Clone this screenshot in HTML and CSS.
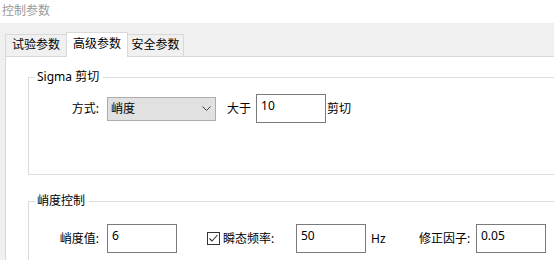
FILE: index.html
```html
<!DOCTYPE html>
<html>
<head>
<meta charset="utf-8">
<link rel="stylesheet" href="styles.css">
</head>
<body>
<div class="title">控制参数</div>
<div class="window">
  <div class="tabs">
    <div class="tab first">试验参数</div>
    <div class="tab active">高级参数</div>
    <div class="tab last">安全参数</div>
  </div>
  <div class="panel">
    <fieldset class="group g1">
      <legend>Sigma 剪切</legend>
      <div class="row">
        <span class="lbl">方式:</span>
        <div class="combo"><span>峭度</span><svg class="chev" width="9" height="5" viewBox="0 0 9 5"><polyline points="0.5,0.5 4.5,4.5 8.5,0.5" fill="none" stroke="#444" stroke-width="1"/></svg></div>
        <span class="gt">大于</span>
        <div class="box">10</div>
        <span class="cut">剪切</span>
      </div>
    </fieldset>
    <fieldset class="group g2">
      <legend>峭度控制</legend>
      <div class="row">
        <span class="lbl">峭度值:</span>
        <div class="box">6</div>
        <span class="chk"><svg width="11" height="11" viewBox="0 0 11 11"><polyline points="1.5,5.5 4,8 9.5,2" fill="none" stroke="#333" stroke-width="1.1"/></svg></span>
        <span class="freq">瞬态频率:</span>
        <div class="box">50</div>
        <span class="hz">Hz</span>
        <span class="corr">修正因子:</span>
        <div class="box">0.05</div>
      </div>
    </fieldset>
  </div>
</div>
</body>
</html>
```

FILE: styles.css
```css
html, body {
  margin: 0;
  width: 554px;
  height: 260px;
  overflow: hidden;
}
body {
  font: 12px/16px "Noto Sans", "Noto Sans CJK SC", sans-serif;
  color: #000;
  background: #f0f0f0;
}
.title {
  height: 23px;
  background: #fff;
  color: #9a9a9a;
  padding-left: 2px;
  line-height: 22px;
}
.window {
  padding: 9px 0 0 5px;
}
.tabs {
  display: flex;
  align-items: flex-end;
  height: 24px;
  position: relative;
  z-index: 1;
}
.tab {
  box-sizing: border-box;
  height: 22px;
  border: 1px solid #d9d9d9;
  border-bottom: none;
  background: #f0f0f0;
  text-align: center;
  line-height: 20px;
}
.first {
  width: 61px;
  border-right: none;
}
.active {
  width: 62px;
  height: 25px;
  margin-bottom: -1px;
  background: #fff;
  line-height: 22px;
}
.last {
  width: 56px;
  border-left: none;
}
.panel {
  background: #fff;
  border-top: 1px solid #d9d9d9;
  border-left: 1px solid #d9d9d9;
  height: 191px;
  padding: 12px 0 0 22px;
  overflow: hidden;
}
fieldset {
  margin: 0;
  padding: 0;
  border: 1px solid #dcdcdc;
  border-right: none;
  min-width: 0;
}
legend {
  margin-left: 6px;
  padding: 0 4px 0 2px;
  line-height: 16px;
}
.row {
  display: flex;
  align-items: center;
  height: 29px;
}
.g1 .row {
  margin-top: 9px;
  margin-bottom: 51px;
}
.g2 {
  margin-top: 18px;
}
.g2 .row {
  margin-top: 15px;
  margin-bottom: 12px;
}
.lbl {
  width: 70px;
  text-align: right;
  margin-right: 8px;
}
.combo {
  box-sizing: border-box;
  width: 109px;
  height: 24px;
  background: #e1e1e1;
  border: 1px solid #adadad;
  display: flex;
  align-items: center;
  justify-content: space-between;
  padding: 0 4px 0 3px;
}
.gt {
  margin-left: 11px;
  margin-right: 5px;
}
.box {
  box-sizing: border-box;
  width: 70px;
  height: 29px;
  border: 1px solid #7a7a7a;
  padding: 3px 4px;
  background: #fff;
}
.cut {
  margin-left: 1px;
}
.chk {
  box-sizing: border-box;
  width: 13px;
  height: 13px;
  border: 1px solid #333;
  margin-left: 30px;
  display: flex;
}
.freq {
  margin-left: 3px;
  width: 73px;
}
.hz {
  margin-left: 5px;
  width: 48px;
}
.corr {
  width: 57px;
}
```
